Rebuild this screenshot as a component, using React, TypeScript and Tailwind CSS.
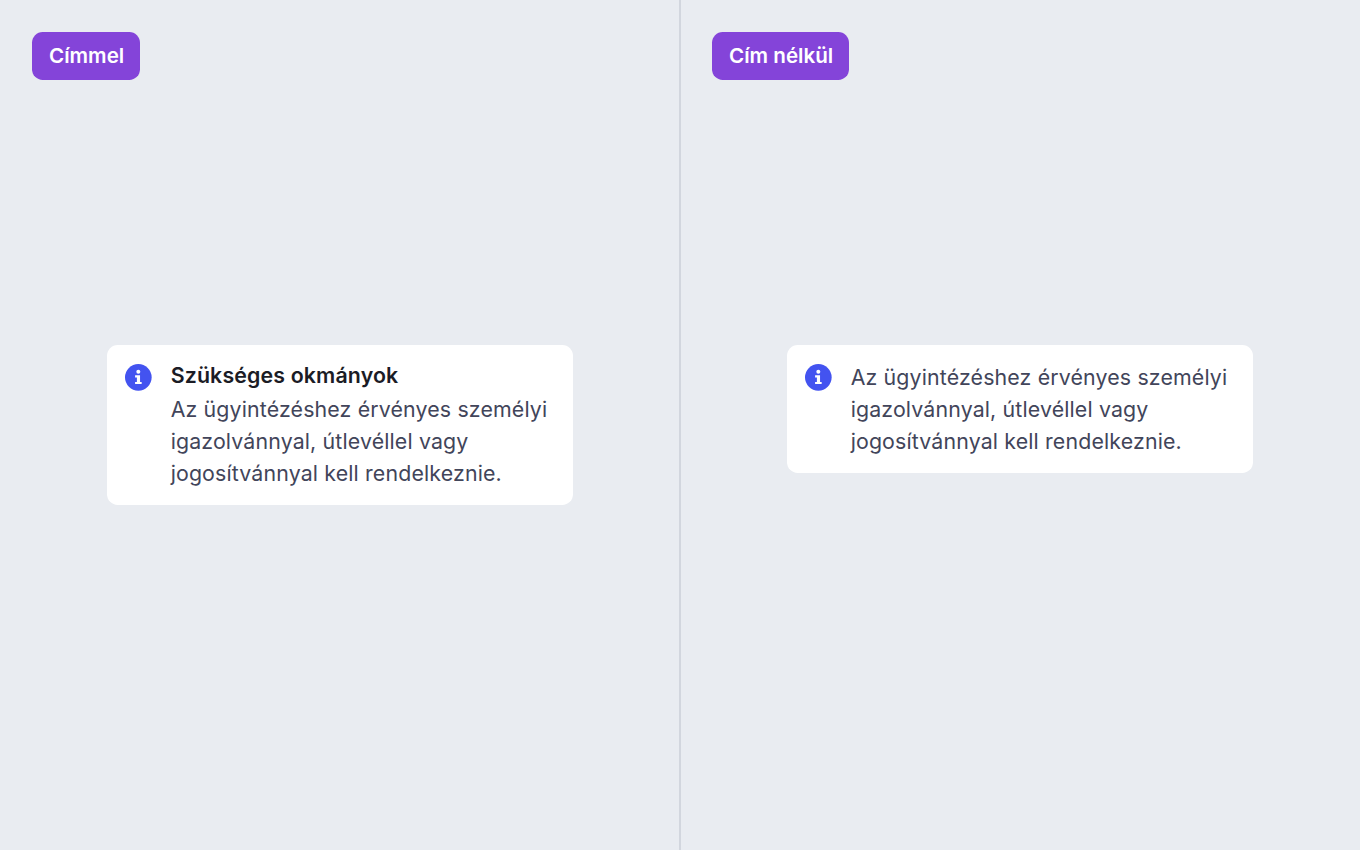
const FONT = "font-['Inter',sans-serif]";

function InfoIcon() {
  return (
    <svg viewBox="0 0 28 28" className="h-[26.67px] w-[26.67px] shrink-0">
      <circle cx="14" cy="14" r="14" fill="#4353f0" />
      <circle cx="14" cy="8.2" r="2.1" fill="#fff" />
      <path d="M10.6 11.8h5.2v7h1.7v2.3h-6.9v-2.3h1.9v-4.7h-1.9z" fill="#fff" />
    </svg>
  );
}

function Notice({ title }: { title?: string }) {
  return (
    <div className="flex w-[466.67px] gap-[18.67px] self-start rounded-[10.67px] bg-white px-[18.67px] py-4">
      <div className="pt-[3px]">
        <InfoIcon />
      </div>
      <div className="min-w-0 flex-1">
        {title && <div className="mb-1 text-[21.33px] font-semibold leading-7 tracking-[0.15px] text-[#1b1c25]">{title}</div>}
        <p className="text-[21.33px] leading-8 tracking-[0.15px] text-[#42455a]">
          Az ügyintézéshez érvényes személyi igazolvánnyal, útlevéllel vagy jogosítvánnyal kell rendelkeznie.
        </p>
      </div>
    </div>
  );
}

function Panel({ label, title, divider }: { label: string; title?: string; divider?: boolean }) {
  return (
    <section className="relative flex w-[680px] justify-center pt-[345px]">
      {divider && <div className="absolute -left-px top-0 h-full w-[2px] bg-[#d2d6de]" />}
      <button className="absolute left-8 top-8 h-12 rounded-[10.67px] bg-[#8444d9] pl-[17px] pr-[15.8px] text-[20.6px] font-semibold text-white">
        {label}
      </button>
      <Notice title={title} />
    </section>
  );
}

export default function App() {
  return (
    <div className={`flex h-[850px] w-[1360px] overflow-hidden bg-[#e9ecf1] ${FONT}`}>
      <Panel label="Címmel" title="Szükséges okmányok" />
      <Panel label="Cím nélkül" divider />
    </div>
  );
}
